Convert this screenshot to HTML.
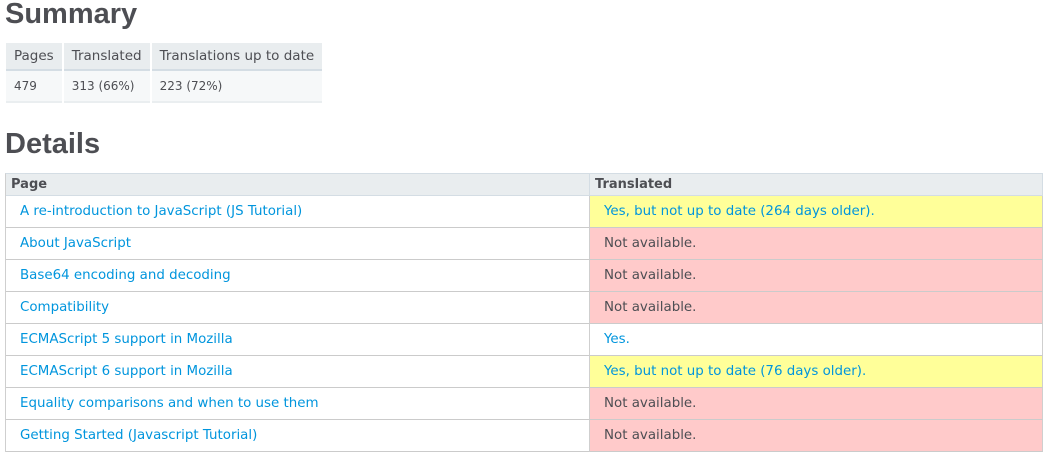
<!DOCTYPE html>
<html><head><style>
body{margin:0;background:#fff;font-family:"DejaVu Sans","Liberation Sans",sans-serif;color:#4d4e53;}
h2{font-family:"Liberation Sans",sans-serif;font-weight:bold;font-size:29px;margin:0;position:absolute;left:5px;color:#4d4e53;}
.s{position:absolute;left:4px;top:43px;border-collapse:separate;border-spacing:2px 0;font-size:12.5px}
.s th{background:#e9edef;border-bottom:2px solid #d4dde4;font-weight:normal;height:26px;padding:0 8px;text-align:left;font-size:13.5px}
.s td{background:#f6f8f9;border-bottom:2px solid #eaeef0;height:30px;padding:0 8px;font-size:12px}
.d{position:absolute;left:5px;top:173px;width:1038px;border-collapse:separate;border-spacing:0;font-size:13.4px;border-top:1px solid #d4dde4;border-left:1px solid #cfcfcf}
.d th{background:#e9edef;border-right:1px solid #d4dde4;border-bottom:1px solid #d4dde4;height:21px;text-align:left;padding:0 5px;font-size:13px;font-weight:bold}
.d td{border-right:1px solid #cfcfcf;border-bottom:1px solid #cbcbcb;height:31px;padding:0 14px;}
.d td:first-child{color:#0095dd;width:555px}
.y{background:#ffff99;color:#0095dd}
.r{background:#ffcaca}
.w{color:#0095dd}
</style></head><body>
<h2 style="top:-2px">Summary</h2>
<table class="s"><tr><th>Pages</th><th>Translated</th><th>Translations up to date</th></tr>
<tr><td>479</td><td>313 (66%)</td><td>223 (72%)</td></tr></table>
<h2 style="top:128px">Details</h2>
<table class="d">
<tr><th>Page</th><th>Translated</th></tr>
<tr><td>A re-introduction to JavaScript (JS Tutorial)</td><td class="y">Yes, but not up to date (264 days older).</td></tr>
<tr><td>About JavaScript</td><td class="r">Not available.</td></tr>
<tr><td>Base64 encoding and decoding</td><td class="r">Not available.</td></tr>
<tr><td>Compatibility</td><td class="r">Not available.</td></tr>
<tr><td>ECMAScript 5 support in Mozilla</td><td class="w">Yes.</td></tr>
<tr><td>ECMAScript 6 support in Mozilla</td><td class="y">Yes, but not up to date (76 days older).</td></tr>
<tr><td>Equality comparisons and when to use them</td><td class="r">Not available.</td></tr>
<tr><td>Getting Started (Javascript Tutorial)</td><td class="r">Not available.</td></tr>
</table>
</body></html>
